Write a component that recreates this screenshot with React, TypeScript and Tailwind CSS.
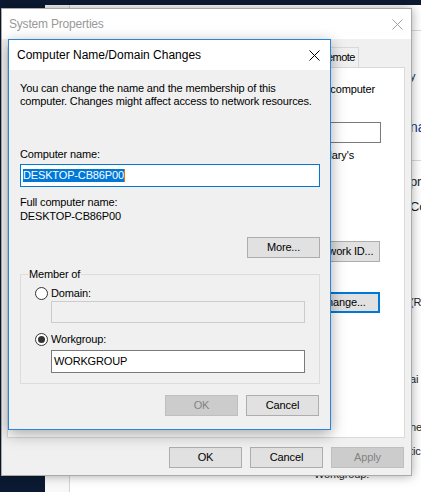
import React from 'react';
import clsx from 'clsx';

const CloseX: React.FC<{ color?: string }> = ({ color = '#000' }) => (
  <svg width="11" height="11" viewBox="0 0 11 11" className="shrink-0">
    <path d="M0.5 0.5L10.5 10.5M10.5 0.5L0.5 10.5" stroke={color} strokeWidth="1" />
  </svg>
);

const Btn: React.FC<{ label: string; disabled?: boolean; isDefault?: boolean; className?: string }> = ({
  label,
  disabled,
  isDefault,
  className,
}) => (
  <div
    className={clsx(
      'flex h-[21px] w-[73px] shrink-0 items-center justify-center',
      disabled
        ? 'border border-[#bfbfbf] bg-[#cccccc] text-[#838383]'
        : isDefault
          ? 'border-2 border-[#0078d7] bg-[#e1e1e1]'
          : 'border border-[#adadad] bg-[#e1e1e1]',
      className,
    )}
  >
    {label}
  </div>
);

const Radio: React.FC<{ checked?: boolean }> = ({ checked }) => (
  <div className="flex h-[13px] w-[13px] shrink-0 items-center justify-center rounded-full border border-[#333] bg-white">
    {checked && <div className="h-[7px] w-[7px] rounded-full bg-[#333]" />}
  </div>
);

const Tab: React.FC<{ label: string; width: string }> = ({ label, width }) => (
  <div className={clsx('flex h-[20px] shrink-0 items-center justify-center border border-b-0 border-[#d9d9d9] bg-[#f0f0f0]', width)}>
    {label}
  </div>
);

export default function App() {
  return (
    <div className="relative h-[492px] w-[421px] overflow-hidden bg-[#0b1a32] font-['Liberation_Sans',Arial,sans-serif] text-[11px] leading-[13px] tracking-[-0.15px] text-black">
      {/* control panel window behind */}
      <div className="absolute left-[45px] top-[5px] flex h-[500px] w-[400px] bg-white">
        <div className="w-[25px] shrink-0 border-r border-[#d4d4d4] bg-[#f8f8f8]" />
        <div className="flex flex-1 flex-col">
          <div className="h-[26px] shrink-0 border-b border-[#dadada]" />
          <div className="ml-[340px] flex flex-col whitespace-nowrap text-[#1e1e1e]">
            <span className="mt-[39px]">y</span>
            <span className="mt-[36px] text-[14px] leading-[17px] text-[#1e3287]">na</span>
            <div className="mt-[24px] h-px w-[20px] bg-[#d9d9d9]" />
            <span className="mt-[13px] text-[13px] leading-[15px]">pri</span>
            <span className="mt-[10px] text-[13px] leading-[15px]">Co</span>
            <span className="mt-[82px]">(R</span>
            <span className="mt-[64px]">ai</span>
            <span className="mt-[35px]">ne</span>
            <span className="mt-[11px]">tic</span>
            <span className="-ml-[96px] mt-[10px]">Workgroup:</span>
          </div>
        </div>
      </div>

      {/* System Properties */}
      <div className="absolute left-[1px] top-[8px] flex h-[468px] w-[411px] flex-col border border-[#aaaaaa] bg-[#f0f0f0] shadow-[0_0_10px_rgba(0,0,0,0.35)]">
        <div className="flex h-[30px] shrink-0 items-center justify-between bg-white pl-[7px] pr-[8px]">
          <span className="text-[12px] tracking-[-0.2px] text-[#999999]">System Properties</span>
          <CloseX color="#a0a0a0" />
        </div>
        <div className="ml-[5px] mr-[6px] mt-[8px] flex overflow-hidden">
          <Tab label="Computer Name" width="w-[88px]" />
          <Tab label="Hardware" width="w-[60px]" />
          <Tab label="Advanced" width="w-[60px]" />
          <Tab label="System Protection" width="w-[100px]" />
          <div className="flex h-[20px] w-[44px] shrink-0 items-center justify-end border border-b-0 border-[#d9d9d9] bg-[#f0f0f0] pr-[3px] tracking-[-0.5px]">
            Remote
          </div>
        </div>
        <div className="ml-[5px] mr-[6px] flex h-[371px] flex-col items-end overflow-hidden border border-[#d9d9d9] bg-white">
          <span className="mr-[29px] mt-[15px] whitespace-nowrap">
            Windows uses the following information to identify your computer
          </span>
          <div className="mr-[23px] mt-[26px] h-[21px] w-[250px] shrink-0 border border-[#7a7a7a] bg-white" />
          <span className="mr-[50px] mt-[6px] whitespace-nowrap">For example: "Kitchen Computer" or "Mary's</span>
          <Btn label="Network ID..." className="mr-[24px] mt-[79px] w-[75px]" />
          <Btn label="Change..." isDefault className="mr-[24px] mt-[30px] w-[75px]" />
        </div>
        <div className="mt-[9px] flex justify-end gap-[8px] pr-[7px]">
          <Btn label="OK" />
          <Btn label="Cancel" />
          <Btn label="Apply" disabled />
        </div>
      </div>

      {/* Computer Name/Domain Changes dialog */}
      <div className="absolute left-[8px] top-[39px] flex h-[391px] w-[323px] flex-col border border-[#2a84d8] bg-[#f0f0f0] shadow-[0_4px_14px_rgba(0,0,0,0.35)]">
        <div className="flex h-[30px] shrink-0 items-center justify-between bg-white pl-[8px] pr-[10px]">
          <span className="text-[12px] tracking-normal">Computer Name/Domain Changes</span>
          <CloseX />
        </div>
        <div className="flex flex-col pl-[11px] pr-[10px] pt-[12px]">
          <p>
            You can change the name and the membership of this
            <br />
            computer. Changes might affect access to network resources.
          </p>
          <span className="mt-[40px]">Computer name:</span>
          <div className="mt-[3px] flex h-[23px] items-center border border-[#0078d7] bg-white pl-[2px]">
            <span className="bg-[#0078d7] text-white">DESKTOP-CB86P00</span>
            <span className="h-[13px] w-px bg-[#d9781c]" />
          </div>
          <span className="mt-[9px]">Full computer name:</span>
          <span className="mt-[1px]">DESKTOP-CB86P00</span>
          <Btn label="More..." className="mt-[14px] self-end" />
          <div className="mt-[16px] flex flex-col border border-[#dcdcdc] pb-[10px]">
            <span className="-mt-[7px] ml-[7px] w-fit bg-[#f0f0f0] px-[1px]">Member of</span>
            <div className="ml-[14px] mt-[6px] flex items-center gap-[3px]">
              <Radio />
              <span>Domain:</span>
            </div>
            <div className="ml-[30px] mt-px h-[22px] w-[254px] border border-[#cccccc] bg-[#f0f0f0]" />
            <div className="ml-[14px] mt-[10px] flex items-center gap-[3px]">
              <Radio checked />
              <span>Workgroup:</span>
            </div>
            <div className="ml-[30px] mt-[4px] flex h-[23px] w-[254px] items-center border border-[#7a7a7a] bg-white pl-[2px]">
              WORKGROUP
            </div>
          </div>
          <div className="mt-[11px] flex justify-end gap-[8px] pr-px">
            <Btn label="OK" disabled />
            <Btn label="Cancel" />
          </div>
        </div>
      </div>
    </div>
  );
}
